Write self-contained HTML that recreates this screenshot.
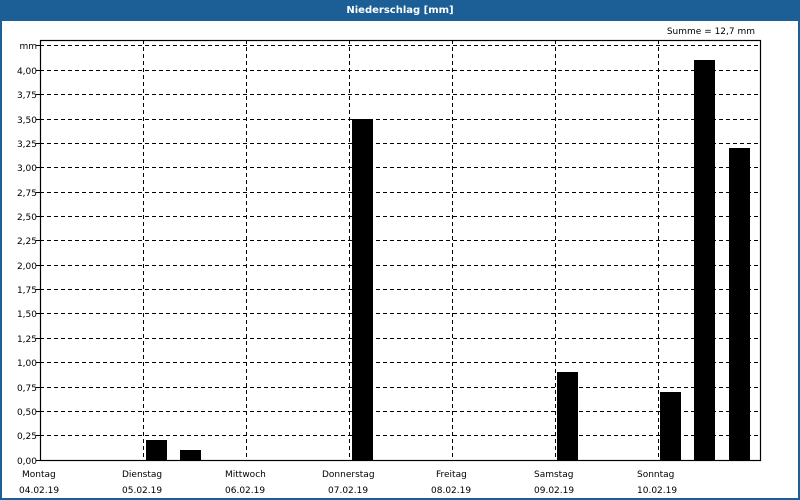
<!DOCTYPE html>
<html><head><meta charset="utf-8"><style>
html,body{margin:0;padding:0;background:#fff}
svg{display:block}
text{font-family:"DejaVu Sans","Liberation Sans",sans-serif;font-size:9px;fill:#000}
</style></head><body>
<svg width="800" height="500" xmlns="http://www.w3.org/2000/svg">
<rect x="0" y="0" width="800" height="500" fill="#fff"/>
<rect x="0" y="0" width="800" height="21" fill="#1c5f96"/>
<rect x="0" y="0" width="2" height="500" fill="#1c5f96"/>
<rect x="798" y="0" width="2" height="500" fill="#1c5f96"/>
<rect x="0" y="498" width="800" height="2" fill="#1c5f96"/>
<text x="400" y="13" text-anchor="middle" style="fill:#fff;font-weight:bold;font-size:10px">Niederschlag [mm]</text>
<text x="755" y="34" text-anchor="end">Summe = 12,7 mm</text>
<g stroke="#000" stroke-width="1" stroke-dasharray="4,3" fill="none">
<path d="M40 45.5H760M40 70.5H760M40 94.5H760M40 119.5H760M40 143.5H760M40 167.5H760M40 192.5H760M40 216.5H760M40 240.5H760M40 265.5H760M40 289.5H760M40 313.5H760M40 338.5H760M40 362.5H760M40 387.5H760M40 411.5H760M40 435.5H760"/>
<path d="M143.5 40V460M246.5 40V460M349.5 40V460M452.5 40V460M555.5 40V460M658.5 40V460"/>
</g>
<g stroke="#000" stroke-width="1" fill="none">
<path d="M36 45.5H40M36 70.5H40M36 94.5H40M36 119.5H40M36 143.5H40M36 167.5H40M36 192.5H40M36 216.5H40M36 240.5H40M36 265.5H40M36 289.5H40M36 313.5H40M36 338.5H40M36 362.5H40M36 387.5H40M36 411.5H40M36 435.5H40M36 460.5H40"/>
<rect x="40.5" y="40.5" width="720" height="420" stroke-width="1.2"/>
</g>
<g fill="#000">
<rect x="146" y="440" width="21" height="20"/>
<rect x="180" y="450" width="21" height="10"/>
<rect x="352" y="119" width="21" height="341"/>
<rect x="557" y="372" width="21" height="88"/>
<rect x="660" y="392" width="21" height="68"/>
<rect x="694" y="60" width="21" height="400"/>
<rect x="729" y="148" width="21" height="312"/>
</g>
<g text-anchor="end">
<text x="37" y="49">mm</text>
<text x="37" y="74">4,00</text><text x="37" y="98">3,75</text><text x="37" y="123">3,50</text>
<text x="37" y="147">3,25</text><text x="37" y="171">3,00</text><text x="37" y="196">2,75</text>
<text x="37" y="220">2,50</text><text x="37" y="244">2,25</text><text x="37" y="269">2,00</text>
<text x="37" y="293">1,75</text><text x="37" y="317">1,50</text><text x="37" y="342">1,25</text>
<text x="37" y="366">1,00</text><text x="37" y="391">0,75</text><text x="37" y="415">0,50</text>
<text x="37" y="439">0,25</text><text x="37" y="464">0,00</text>
</g>
<g>
<text x="22" y="477">Montag</text><text x="19" y="493">04.02.19</text>
<text x="122" y="477">Dienstag</text><text x="122" y="493">05.02.19</text>
<text x="225" y="477">Mittwoch</text><text x="225" y="493">06.02.19</text>
<text x="322" y="477">Donnerstag</text><text x="328" y="493">07.02.19</text>
<text x="436" y="477">Freitag</text><text x="431" y="493">08.02.19</text>
<text x="534" y="477">Samstag</text><text x="534" y="493">09.02.19</text>
<text x="637" y="477">Sonntag</text><text x="637" y="493">10.02.19</text>
</g>
</svg>
</body></html>
